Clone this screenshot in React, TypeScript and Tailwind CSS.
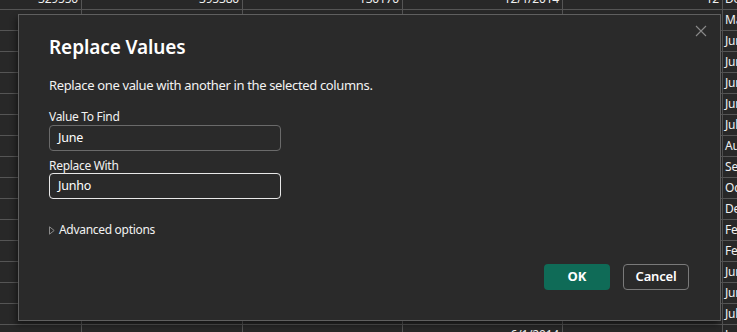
import React from 'react'

const FONT = '"Noto Sans", "Open Sans", sans-serif'

const MONTHS = [
  'December',
  'March',
  'June',
  'June',
  'June',
  'June',
  'July',
  'August',
  'September',
  'October',
  'December',
  'February',
  'February',
  'June',
  'June',
  'July',
  'June',
]

const COL_W = ['w-[82px]', 'w-[161px]', 'w-[160px]', 'w-[160px]', 'w-[160px]']

function GridRow({ month, cells }: { month: string; cells: string[] }) {
  return (
    <div className="flex h-[21px] border-b border-[#555555]">
      {COL_W.map((w, i) => (
        <div
          key={i}
          className={`${w} shrink-0 border-r border-[#555555] pr-[3px] text-right text-[12px] leading-[20px] tracking-[-0.2px] text-[#f0f0f0]`}
        >
          {cells[i] ?? ''}
        </div>
      ))}
      <div className="pl-[2px] text-[12px] leading-[20px] tracking-[-0.2px] text-[#f0f0f0] whitespace-nowrap">
        {month}
      </div>
    </div>
  )
}

function CloseIcon() {
  return (
    <svg width="12" height="12" viewBox="0 0 12 12" className="block">
      <path d="M1 1 L11 11 M11 1 L1 11" stroke="#8a8a8a" strokeWidth="1.1" fill="none" />
    </svg>
  )
}

export default function App() {
  return (
    <div
      className="relative w-[737px] h-[332px] overflow-hidden bg-[#282828]"
      style={{ fontFamily: FONT }}
    >
      {/* data grid behind the dialog */}
      <div className="mt-[-11px]">
        {MONTHS.map((m, i) => (
          <GridRow
            key={i}
            month={m}
            cells={
              i === 0
                ? ['329550', '395380', '130170', '12/1/2014', '12']
                : i === 16
                  ? ['', '', '', '6/1/2014', '']
                  : []
            }
          />
        ))}
      </div>

      {/* modal */}
      <div className="absolute left-[18px] top-[14px] w-[703px] h-[307px] border border-[#5f5f5f] bg-[#2a2a2a] shadow-[-2px_4px_6px_rgba(0,0,0,0.45)]">
        <button className="absolute right-[11px] top-[8px] p-[2px]">
          <CloseIcon />
        </button>

        <div className="pl-[30px] pt-[18px]">
          <h1 className="text-[19px] leading-[28px] font-semibold tracking-[-0.1px] text-white">Replace Values</h1>
          <p className="mt-[14px] text-[13px] leading-[20px] tracking-[-0.35px] text-[#f2f2f2]">
            Replace one value with another in the selected columns.
          </p>

          <label className="block mt-[15px] text-[12px] leading-[14px] tracking-[-0.3px] text-[#f2f2f2]">
            Value To Find
          </label>
          <div className="mt-[1px] w-[232px] h-[26px] rounded-[4px] border border-[#6a6a6a] px-[8px] text-[12.5px] leading-[24px] tracking-[-0.2px] text-white">
            June
          </div>

          <label className="block mt-[8px] text-[12px] leading-[14px] tracking-[-0.3px] text-[#f2f2f2]">
            Replace With
          </label>
          <div className="w-[232px] h-[26px] rounded-[4px] border border-[#e8e8e8] px-[8px] text-[12.5px] leading-[24px] tracking-[-0.2px] text-white">
            Junho
          </div>

          <div className="mt-[22px] flex items-center gap-[4px] text-[12px] leading-[18px] tracking-[-0.3px] text-[#f2f2f2]">
            <svg width="6" height="9" viewBox="0 0 6 9" className="block">
              <path d="M0.5 0.8 L5.2 4.5 L0.5 8.2 Z" stroke="#8a8a8a" strokeWidth="1" fill="none" />
            </svg>
            <span>Advanced options</span>
          </div>
        </div>

        <div className="absolute right-[31px] bottom-[30px] flex gap-[13px]">
          <button className="w-[66px] h-[26px] rounded-[4px] bg-[#0f6b57] text-[13px] font-bold text-white">
            OK
          </button>
          <button className="w-[66px] h-[26px] rounded-[4px] border border-[#7a7a7a] text-[13px] font-semibold tracking-[-0.2px] text-white">
            Cancel
          </button>
        </div>
      </div>
    </div>
  )
}
